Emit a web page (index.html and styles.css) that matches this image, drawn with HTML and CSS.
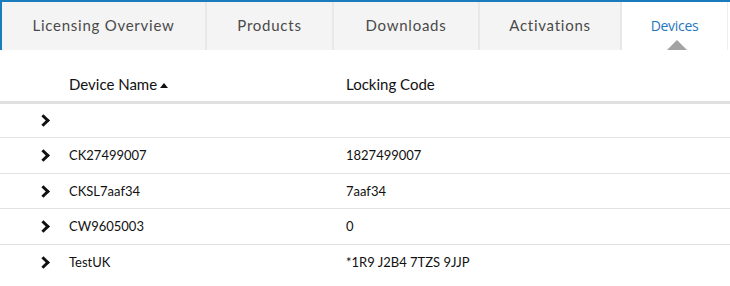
FILE: index.html
```html
<!DOCTYPE html>
<html>
<head>
<meta charset="utf-8">
<link rel="stylesheet" href="styles.css">
</head>
<body>
<div class="tabs">
  <div class="tab t1">Licensing Overview</div>
  <div class="tab t2">Products</div>
  <div class="tab t3">Downloads</div>
  <div class="tab t4">Activations</div>
  <div class="tab t5 active">Devices<span class="caret"></span></div>
</div>
<table class="grid">
  <thead>
    <tr><th class="exp"></th><th class="c1">Device Name <span class="sort"></span></th><th class="c2">Locking Code</th></tr>
  </thead>
  <tbody>
    <tr><td class="exp"><span class="chev"></span></td><td></td><td></td></tr>
    <tr><td class="exp"><span class="chev"></span></td><td>CK27499007</td><td>1827499007</td></tr>
    <tr><td class="exp"><span class="chev"></span></td><td>CKSL7aaf34</td><td>7aaf34</td></tr>
    <tr><td class="exp"><span class="chev"></span></td><td>CW9605003</td><td>0</td></tr>
    <tr class="last"><td class="exp"><span class="chev"></span></td><td>TestUK</td><td>*1R9 J2B4 7TZS 9JJP</td></tr>
  </tbody>
</table>
</body>
</html>
```
FILE: styles.css
```css
html, body { margin: 0; padding: 0; background: #fff; }
body { width: 730px; height: 286px; overflow: hidden; font-family: Lato, "Open Sans", sans-serif; }
.tabs {
  display: flex;
  height: 50px;
  border-top: 2px solid #1a7bbd;
  border-left: 2px solid #1a7bbd;
  box-sizing: border-box;
  width: 730px;
}
.tab {
  background: #f4f4f4;
  border-right: 2px solid #e8e8e8;
  color: #4a4a4a;
  font-size: 15px;
  letter-spacing: 0.75px;
  display: flex;
  align-items: center;
  justify-content: center;
  padding-bottom: 2px;
  box-sizing: border-box;
  position: relative;
}
.t1 { width: 205px; }
.t2 { width: 127px; }
.t3 { width: 146px; }
.t4 { width: 142px; }
.t5 { width: 106px; }
.tab.active {
  background: #fff;
  color: #1f77bb;
  letter-spacing: -0.3px;
  font-family: "Open Sans", sans-serif;
  font-size: 14px;
  border-right: 1px solid #eee;
}
.caret {
  position: absolute;
  left: 45px;
  bottom: 0;
  width: 0; height: 0;
  border-left: 10px solid transparent;
  border-right: 10px solid transparent;
  border-bottom: 10px solid #a3a3a3;
}
.grid {
  border-collapse: collapse;
  width: 730px;
  font-size: 13px;
  color: #111;
}
.grid th {
  text-align: left;
  font-weight: normal;
  font-size: 15px;
  color: #111;
  height: 52px;
  padding: 0 0 8px 0;
  vertical-align: bottom;
  border-bottom: 3px solid #e0e0e0;
  box-sizing: border-box;
}
.grid td {
  height: 35.5px;
  padding: 0;
  border-bottom: 1px solid #e2e2e2;
  box-sizing: border-box;
}
.grid tr.last td { border-bottom: none; }
.exp { width: 69px; }
.c1 { width: 277px; }
.chev {
  display: inline-block;
  width: 6px; height: 6px;
  border-right: 3px solid #111;
  border-bottom: 3px solid #111;
  transform: rotate(-45deg);
  margin-left: 39px;
  margin-top: 2px;
}
.sort {
  display: inline-block;
  width: 0; height: 0;
  border-left: 4.5px solid transparent;
  border-right: 4.5px solid transparent;
  border-bottom: 5px solid #111;
  vertical-align: 2px;
  margin-left: -1px;
}
```
